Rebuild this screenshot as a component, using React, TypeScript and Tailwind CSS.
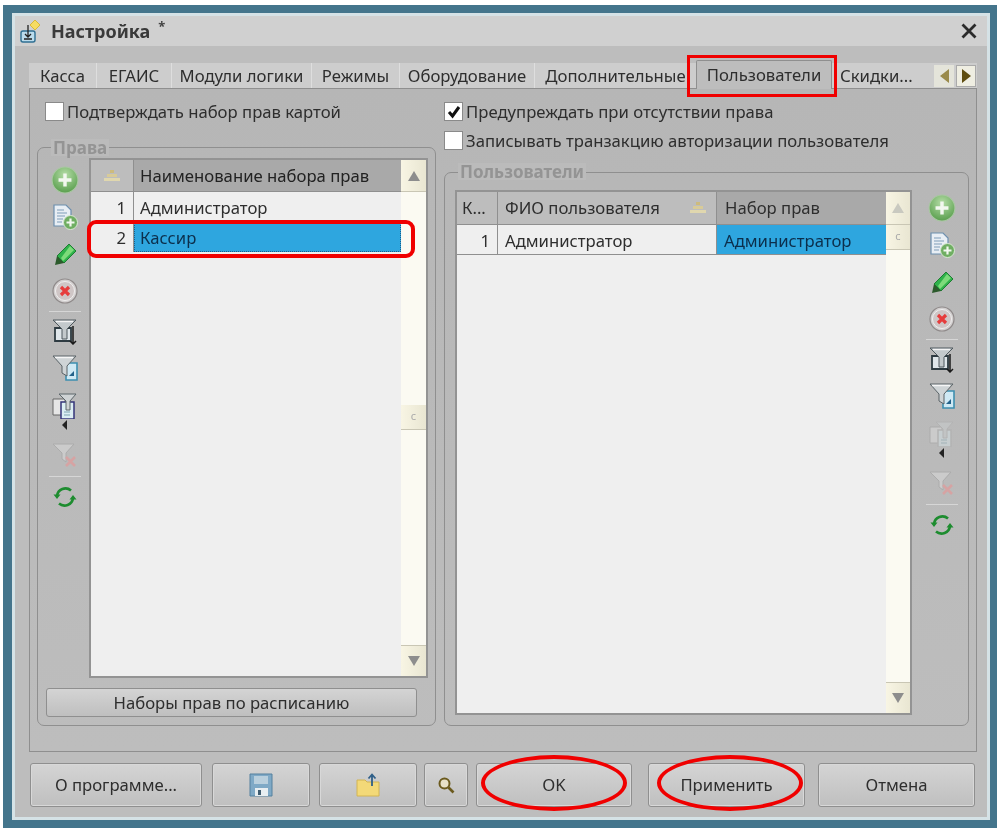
import React from 'react';

const font = "font-['Noto_Sans','Liberation_Sans',sans-serif]";

const AddIcon = ({ id }: { id: string }) => (
  <svg width="28" height="28" viewBox="0 0 26 26">
    <defs>
      <radialGradient id={id} cx="50%" cy="30%" r="70%">
        <stop offset="0%" stopColor="#b4dca6" />
        <stop offset="100%" stopColor="#5a9f4e" />
      </radialGradient>
    </defs>
    <circle cx="13" cy="13" r="12" fill={`url(#${id})`} stroke="#a9c7a2" />
    <path d="M13 7v12M7 13h12" stroke="#f2f7ef" strokeWidth="3.2" />
  </svg>
);

const DocAddIcon = () => (
  <svg width="26" height="26" viewBox="0 0 26 26">
    <path d="M2 1h12l5 5v16H2z" fill="#e8eef4" stroke="#6d8fae" strokeWidth="1.2" />
    <path d="M5 6h7M5 9h10M5 12h8M5 15h6M5 18h5" stroke="#7f9db8" />
    <circle cx="18.5" cy="18.5" r="7" fill="#6fae62" stroke="#d9e8d4" />
    <path d="M18.5 14.5v8M14.5 18.5h8" stroke="#f2f7ef" strokeWidth="2.2" />
  </svg>
);

const PencilIcon = () => (
  <svg width="26" height="26" viewBox="0 0 26 26">
    <path d="M17 3l7 7-12 12-7-7z" fill="#2fb24a" stroke="#1f7d33" />
    <path d="M18 5l4 4-11 11-2-3z" fill="#7ddb7a" />
    <path d="M5 15l7 7-9 2z" fill="#2c5a2c" />
  </svg>
);

const DeleteIcon = () => (
  <svg width="26" height="26" viewBox="0 0 26 26">
    <circle cx="13" cy="13" r="12" fill="#d2cfcf" stroke="#8f8a8a" strokeWidth="1.2" />
    <circle cx="13" cy="13" r="9.5" fill="#cfc6c6" stroke="#efefef" />
    <path d="M9 9l8 8M17 9l-8 8" stroke="#e63c3c" strokeWidth="3.2" />
  </svg>
);

const FilterSortIcon = () => (
  <svg width="26" height="26" viewBox="0 0 26 26">
    <path d="M3 9h16v13H3z" fill="#dfe6ea" stroke="#2e3b42" strokeWidth="1.8" />
    <path d="M1 1h23l-9 9v10h-5V10z" fill="#c3c9cc" stroke="#4f595e" />
    <path d="M4 2.5h17" stroke="#f4f4f4" strokeWidth="1.4" />
    <path d="M21 7v18M18 22l3 3 3-3" stroke="#1a1a1a" strokeWidth="1.5" fill="none" />
  </svg>
);

const FilterDocIcon = () => (
  <svg width="26" height="26" viewBox="0 0 26 26">
    <path d="M14 8h11v17H14z" fill="#cfe9f4" stroke="#3d8fb0" strokeWidth="1.6" />
    <path d="M1 1h23l-9 10v10l-5-3v-7z" fill="#cfd4d6" stroke="#5a6367" />
    <path d="M3 2.5h18" stroke="#f6f6f6" strokeWidth="1.4" />
    <path d="M17 21l5-5v5z" fill="#23628a" />
  </svg>
);

const FilterCopyIcon = ({ off }: { off?: boolean }) => (
  <svg width="26" height="26" viewBox="0 0 26 26">
    <path d="M1 6h12v16H1z" fill="#e6e6e6" stroke={off ? '#999' : '#666'} />
    <path d="M9 9h13v17H9z" fill="#dceef3" stroke={off ? '#aaa' : '#34347a'} strokeWidth="1.5" />
    <path d="M7 1h17l-6 7v9h-4V8z" fill="#cfd3d5" stroke={off ? '#aaa' : '#5c666b'} />
    <path d="M12 19h6M12 22h6" stroke="#7ea5b2" />
  </svg>
);

const FilterClearIcon = () => (
  <svg width="26" height="26" viewBox="0 0 26 26">
    <path d="M1 2h21l-8 9v9l-4-3v-6z" fill="#cbcbcb" stroke="#acacac" />
    <path d="M14 15l9 9M23 15l-9 9" stroke="#d6a3a3" strokeWidth="2.6" />
  </svg>
);

const RefreshIcon = () => (
  <svg width="26" height="26" viewBox="0 0 26 26" fill="none">
    <path d="M5 12a8.5 8.5 0 0 1 14-5.5" stroke="#1d8c2f" strokeWidth="2.6" />
    <path d="M21 14a8.5 8.5 0 0 1-14 5.5" stroke="#1d8c2f" strokeWidth="2.6" />
    <path d="M1.5 10.5h7L5 15zM24.5 15.5h-7L21 11z" fill="#1d8c2f" />
  </svg>
);

const SortIcon = () => (
  <svg width="20" height="14" viewBox="0 0 20 14">
    <path d="M8 1h4v3H8z" fill="#cdbb7d" />
    <path d="M5 5h10v3H5z" fill="#d8cb98" />
    <path d="M2 9h16v3H2z" fill="#e0d7ae" />
  </svg>
);

const ToolSep = ({ className }: { className: string }) => (
  <div className={`h-px w-[32px] bg-[#d6d6d6] ${className}`} />
);

const Toolbar = ({ prefix, copyOff, className }: { prefix: string; copyOff?: boolean; className: string }) => (
  <div className={`flex w-[53px] flex-col items-center ${className}`}>
    <div className="-my-px h-[28px]"><AddIcon id={prefix} /></div>
    <div className="mt-[11px] h-[26px]"><DocAddIcon /></div>
    <div className="mt-[11px] h-[26px]"><PencilIcon /></div>
    <div className="mt-[11px] h-[26px]"><DeleteIcon /></div>
    <ToolSep className="mt-[7px]" />
    <div className="mt-[7px] h-[26px]"><FilterSortIcon /></div>
    <div className="mt-[10px] h-[26px]"><FilterDocIcon /></div>
    <div className={`mt-[12px] h-[26px] ${copyOff ? 'opacity-40' : ''}`}><FilterCopyIcon off={copyOff} /></div>
    <div className="mt-[1px] h-0 w-0 border-y-[5px] border-r-[5px] border-y-transparent border-r-[#222]" />
    <div className="mt-[12px] h-[26px]"><FilterClearIcon /></div>
    <ToolSep className="mt-[8px]" />
    <div className="mt-[7px] h-[26px]"><RefreshIcon /></div>
  </div>
);

const ScrollBar = ({ className, thumbClass, headClass, faded }: { className: string; thumbClass: string; headClass: string; faded?: boolean }) => (
  <div className={`flex shrink-0 flex-col bg-[#fbfaf2] ${className}`}>
    <div className={`flex shrink-0 items-center justify-center border-b border-[#c9c6b4] bg-gradient-to-r from-[#f8f5e4] to-[#e9e6d2] ${headClass}`}>
      <div className={`h-0 w-0 border-x-[6px] border-b-[10px] border-x-transparent ${faded ? 'border-b-[#c9c9c0]' : 'border-b-[#8d8d8d]'}`} />
    </div>
    <div className={`flex items-center justify-center ${thumbClass}`}>
      <div className="h-[25px] w-full border-b border-[#c9c6b4] bg-gradient-to-r from-[#f8f5e4] to-[#e9e6d2] text-center text-[11px] leading-[22px] text-[#aaa]">c</div>
    </div>
    <div className="flex-1" />
    <div className="flex h-[31px] shrink-0 items-center justify-center border-t border-[#c9c6b4] bg-gradient-to-r from-[#f8f5e4] to-[#e9e6d2]">
      <div className="h-0 w-0 border-x-[6px] border-t-[10px] border-x-transparent border-t-[#8d8d8d]" />
    </div>
  </div>
);

const CheckBox = ({ checked, label, className }: { checked?: boolean; label: string; className?: string }) => (
  <div className={`flex h-[19px] items-center ${className ?? ''}`}>
    <div className="flex h-[19px] w-[19px] shrink-0 items-center justify-center border border-[#8a8a8a] bg-white">
      {checked && (
        <svg width="14" height="14" viewBox="0 0 14 14">
          <path d="M2 7l3.5 4L12 2" fill="none" stroke="#111" strokeWidth="3" />
        </svg>
      )}
    </div>
    <span className="ml-[3px] whitespace-nowrap">{label}</span>
  </div>
);

const Tab = ({ label, className, last }: { label: string; className: string; last?: boolean }) => (
  <div className={`flex h-[25px] shrink-0 items-center justify-center whitespace-nowrap bg-[#cdcdcd] ${last ? '' : 'border-r border-[#dedede]'} ${className}`}>
    {label}
  </div>
);

const BottomBtn = ({ className, children }: { className: string; children: React.ReactNode }) => (
  <div className={`flex h-[44px] shrink-0 items-center justify-center rounded-[3px] border border-[#8f8f8f] bg-gradient-to-b from-[#d4d4d4] to-[#bfbfbf] shadow-[inset_0_0_0_1px_#d8d8d8] ${className}`}>
    {children}
  </div>
);

const GroupLegend = ({ text, className }: { text: string; className: string }) => (
  <div className={`absolute bg-[#bbbbbb] px-[2px] font-bold leading-none text-[#949494] ${className}`}>{text}</div>
);

const HeadCell = ({ className, children }: { className: string; children?: React.ReactNode }) => (
  <div className={`flex h-full items-center border-r border-[#8f8f8f] ${className}`}>{children}</div>
);

export default function App() {
  return (
    <div className={`relative h-[834px] w-[1000px] overflow-hidden bg-white pl-[3px] pt-[5px] text-[16.7px] text-[#2e2e2e] ${font}`}>
      <div className="h-[823px] w-[994px] bg-[#44758c] pb-[8px] pl-[9px] pr-[7px] pt-[8px]">
        <div className="flex h-full flex-col border-[3px] border-[#d5e2e6] blur-[0.6px]">
          {/* Title */}
          <div className="flex h-[30px] shrink-0 items-center bg-[#d0d0d0] pl-[4px] pr-[9px]">
            <svg width="26" height="26" viewBox="0 0 26 26">
              <path d="M16 2l5 5-5 5-5-5z" fill="#f6dc62" stroke="#d8b93a" />
              <rect x="2" y="13" width="14" height="11" rx="2" fill="#bcdcec" stroke="#2f6f92" strokeWidth="1.4" />
              <path d="M9 7v12M6 16l3 3 3-3M5 21h8" stroke="#222" strokeWidth="1.3" fill="none" />
            </svg>
            <span className="ml-[6px] text-[18px] font-bold text-[#3a3a3a]">Настройка</span>
            <span className="-mt-[8px] ml-[8px] text-[13px] font-bold text-[#444]">*</span>
            <svg className="ml-auto" width="18" height="18" viewBox="0 0 18 18">
              <path d="M2.5 2.5l13 13M15.5 2.5l-13 13" stroke="#2b2b2b" strokeWidth="2.8" />
            </svg>
          </div>

          <div className="flex flex-1 flex-col bg-[#bdbdbd] pl-[14px] pr-[10px] pt-[17px]">
            {/* Tabs */}
            <div className="relative z-10 flex h-[25px] shrink-0">
              <Tab label="Касса" className="w-[68px]" />
              <Tab label="ЕГАИС" className="w-[75px]" />
              <Tab label="Модули логики" className="w-[140px]" />
              <Tab label="Режимы" className="w-[88px]" />
              <Tab label="Оборудование" className="w-[135px]" />
              <Tab label="Дополнительные" className="w-[161px]" last />
              <div className="-mt-[3px] flex h-[29px] w-[136px] shrink-0 items-center justify-center rounded-t-[2px] border-x border-t border-[#8f8f8f] bg-[#bdbdbd]">
                Пользователи
              </div>
              <Tab label="Скидки..." className="w-[98px] !justify-start pl-[8px]" last />
              <div className="flex h-[25px] w-[47px] shrink-0 items-center bg-[#cdcdcd] pl-[4px]">
                <div className="flex h-[22px] w-[20px] items-center justify-center bg-[#e4e4da]">
                  <div className="h-0 w-0 border-y-[7px] border-r-[9px] border-y-transparent border-r-[#9a8a4a]" />
                </div>
                <div className="ml-[2px] flex h-[22px] w-[20px] items-center justify-center border border-[#aaa] bg-[#efeee2]">
                  <div className="h-0 w-0 border-y-[7px] border-l-[9px] border-y-transparent border-l-[#5f4d10]" />
                </div>
              </div>
            </div>

            {/* Panel */}
            <div className="flex h-[664px] shrink-0 gap-[8px] border border-[#8f8f8f] bg-gradient-to-b from-[#b6b6b6] to-[#bdbdbd] pl-[7px] pt-[13px]">
              {/* Left column */}
              <div className="flex w-[399px] shrink-0 flex-col">
                <CheckBox className="ml-[8px]" label="Подтверждать набор прав картой" />
                <div className="relative mt-[26px] flex h-[579px] rounded-[7px] border border-[#8f8f8f]">
                  <GroupLegend text="Права" className="-top-[9px] left-[13px] text-[17px]" />
                  <Toolbar prefix="leftAdd" className="pt-[19px]" />
                  <div className="flex flex-1 flex-col pr-[7px] pt-[10px]">
                    <div className="-ml-[2px] flex h-[520px] border-2 border-[#939393] bg-[#efefef]">
                      <div className="flex min-w-0 flex-1 flex-col">
                        <div className="flex h-[32px] shrink-0 border-b border-[#8f8f8f] bg-[#a9a9a9]">
                          <HeadCell className="w-[43px] justify-center bg-[#bdbdbd]"><SortIcon /></HeadCell>
                          <div className="flex flex-1 items-center pl-[6px] text-[#222]">Наименование набора прав</div>
                        </div>
                        <div className="flex h-[30px] shrink-0">
                          <div className="w-[43px] border-r border-[#8f8f8f] pr-[7px] text-right leading-[32px]">1</div>
                          <div className="flex-1 pl-[6px] leading-[32px]">Администратор</div>
                        </div>
                        <div className="flex h-[30px] shrink-0">
                          <div className="w-[43px] border-r border-[#8f8f8f] pr-[7px] text-right leading-[32px]">2</div>
                          <div className="flex-1 border border-dotted border-[#1a5f8a] bg-[#2ea6df] pl-[5px] leading-[30px] text-[#0c2f4c]">Кассир</div>
                        </div>
                      </div>
                      <ScrollBar className="w-[25px]" headClass="h-[32px]" thumbClass="mt-[213px]" />
                    </div>
                    <div className="-ml-[45px] mt-[10px] flex h-[29px] w-[371px] items-center justify-center rounded-[3px] border border-[#8f8f8f] bg-gradient-to-b from-[#d4d4d4] to-[#bfbfbf]">
                      Наборы прав по расписанию
                    </div>
                  </div>
                </div>
              </div>

              {/* Right column */}
              <div className="flex w-[525px] shrink-0 flex-col">
                <CheckBox checked label="Предупреждать при отсутствии права" />
                <div className="mt-[10px]">
                  <CheckBox label="Записывать транзакцию авторизации пользователя" />
                </div>
                <div className="relative mt-[22px] flex h-[554px] rounded-[7px] border border-[#8f8f8f] pl-[10px]">
                  <GroupLegend text="Пользователи" className="-top-[10px] left-[13px] text-[17px]" />
                  <div className="flex flex-col pt-[17px]">
                    <div className="flex h-[525px] w-[457px] border-2 border-[#939393] bg-[#efefef]">
                      <div className="flex min-w-0 flex-1 flex-col">
                        <div className="flex h-[33px] shrink-0 border-b border-[#8f8f8f] bg-[#bdbdbd]">
                          <HeadCell className="w-[41px] pl-[5px]">К...</HeadCell>
                          <HeadCell className="w-[219px] justify-between pl-[7px] pr-[8px]">
                            <span>ФИО пользователя</span>
                            <SortIcon />
                          </HeadCell>
                          <div className="flex flex-1 items-center bg-[#a9a9a9] pl-[8px]">Набор прав</div>
                        </div>
                        <div className="flex h-[30px] shrink-0 border-b border-[#8f8f8f]">
                          <div className="w-[41px] border-r border-[#8f8f8f] pr-[7px] text-right leading-[31px]">1</div>
                          <div className="w-[219px] border-r border-[#8f8f8f] pl-[7px] leading-[31px]">Администратор</div>
                          <div className="flex-1 bg-[#2ea6df] pl-[7px] leading-[31px] text-[#0c2f4c]">Администратор</div>
                        </div>
                      </div>
                      <ScrollBar className="w-[24px]" headClass="h-[33px]" thumbClass="" faded />
                    </div>
                  </div>
                  <Toolbar prefix="rightAdd" copyOff className="ml-[3px] pt-[22px]" />
                </div>
              </div>
            </div>

            {/* Bottom buttons */}
            <div className="mt-[11px] flex">
              <BottomBtn className="ml-[1px] w-[172px]">О программе...</BottomBtn>
              <BottomBtn className="ml-[10px] w-[98px]">
                <svg width="26" height="26" viewBox="0 0 26 26">
                  <path d="M2 2h22v22H2z" fill="#7fa9c6" stroke="#55809e" />
                  <path d="M6 4h14v8H6z" fill="#b9cfdd" />
                  <path d="M7 16h13v8H7z" fill="#e8eef1" />
                  <path d="M10 18h3v5h-3z" fill="#3f5c70" />
                </svg>
              </BottomBtn>
              <BottomBtn className="ml-[9px] w-[98px]">
                <svg width="26" height="26" viewBox="0 0 26 26">
                  <path d="M2 8h8l2 2h12v14H2z" fill="#f3d978" stroke="#d2b452" />
                  <path d="M17 14V3M13.5 6.5L17 2.5l3.5 4" stroke="#2f5f88" strokeWidth="1.8" fill="none" />
                </svg>
              </BottomBtn>
              <BottomBtn className="ml-[7px] w-[44px]">
                <svg width="18" height="18" viewBox="0 0 18 18">
                  <circle cx="7.5" cy="7.5" r="5" fill="#e7e0c8" stroke="#6b5a1e" strokeWidth="2" />
                  <path d="M11.5 11.5l5 5" stroke="#6b5a1e" strokeWidth="2.6" />
                </svg>
              </BottomBtn>
              <BottomBtn className="ml-[8px] w-[156px]">OK</BottomBtn>
              <BottomBtn className="ml-[16px] w-[157px]">Применить</BottomBtn>
              <BottomBtn className="ml-[13px] w-[157px]">Отмена</BottomBtn>
            </div>
          </div>
        </div>
      </div>

      {/* Red annotations */}
      <div className="absolute left-[687px] top-[55px] h-[42px] w-[150px] border-[3px] border-[#f00000]" />
      <div className="absolute left-[87px] top-[220px] h-[38px] w-[328px] rounded-[9px] border-[4px] border-[#f00000]" />
      <div className="absolute left-[481px] top-[755px] h-[56px] w-[146px] rounded-[50%] border-[4px] border-[#f00000]" />
      <div className="absolute left-[657px] top-[755px] h-[56px] w-[146px] rounded-[50%] border-[4px] border-[#f00000]" />
    </div>
  );
}
